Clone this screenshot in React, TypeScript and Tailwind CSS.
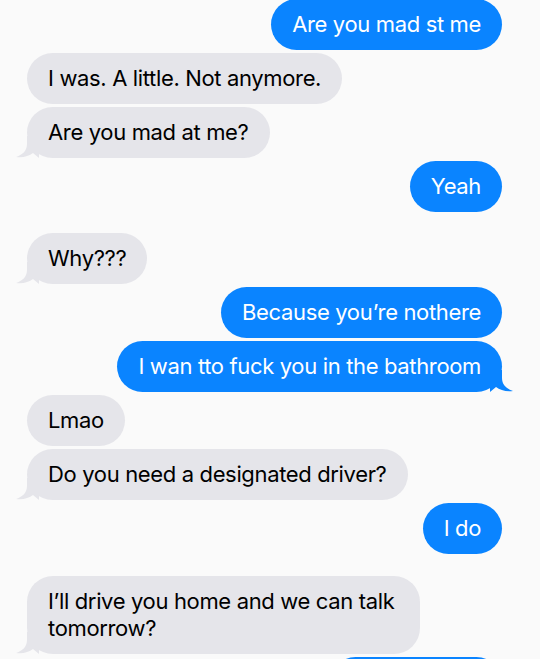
const BLUE = "bg-[#0a84ff] text-white";
const GRAY = "bg-[#e5e5ea] text-black";

type Msg = { text: string; me: boolean; tail?: boolean; gap?: string };

const messages: Msg[] = [
  { text: "Are you mad st me", me: true },
  { text: "I was. A little. Not anymore.", me: false },
  { text: "Are you mad at me?", me: false, tail: true },
  { text: "Yeah", me: true },
  { text: "Why???", me: false, tail: true, gap: "mt-[18px]" },
  { text: "Because you’re nothere", me: true },
  { text: "I wan tto fuck you in the bathroom", me: true, tail: true },
  { text: "Lmao", me: false },
  { text: "Do you need a designated driver?", me: false, tail: true },
  { text: "I do", me: true },
  { text: "I’ll drive you home and we can talk tomorrow?", me: false, tail: true, gap: "mt-[19px]" },
  { text: "Okay, thanks", me: true },
];

const Tail = ({ me }: { me: boolean }) => {
  // little curl at the bottom corner of the last bubble in a run
  if (me) {
    return (
      <svg className="absolute -right-[12px] bottom-0" width="24" height="22" viewBox="0 0 24 22">
        <path d="M12 0 L12 8 C12 15 17 19 23 21 C16 22 10 20 6 17 L0 22 L0 0 Z" fill="#0a84ff" />
      </svg>
    );
  }
  return (
    <svg className="absolute -left-[12px] bottom-0" width="24" height="22" viewBox="0 0 24 22">
      <path d="M12 0 L12 8 C12 15 7 19 1 21 C8 22 14 20 18 17 L24 22 L24 0 Z" fill="#e5e5ea" />
    </svg>
  );
};

const Bubble = ({ msg }: { msg: Msg }) => (
  <div className={`flex ${msg.me ? "justify-end" : "justify-start"} ${msg.gap ?? ""}`}>
    <div
      className={`relative max-w-[393px] rounded-[26px] px-[21px] py-[12px] text-[22px] leading-[27px] tracking-[-0.35px] ${
        msg.me ? BLUE : GRAY
      }`}
    >
      {msg.tail && <Tail me={msg.me} />}
      <span className="relative">{msg.text}</span>
    </div>
  </div>
);

export default function App() {
  return (
    <div
      className="h-[659px] w-[540px] overflow-hidden bg-[#fafafa]"
      style={{ fontFamily: "Inter, 'Noto Sans', sans-serif" }}
    >
      <div className="-mt-px flex flex-col gap-[3px] pl-[27px] pr-[38px]">
        {messages.map((m, i) => (
          <Bubble key={i} msg={m} />
        ))}
      </div>
    </div>
  );
}
